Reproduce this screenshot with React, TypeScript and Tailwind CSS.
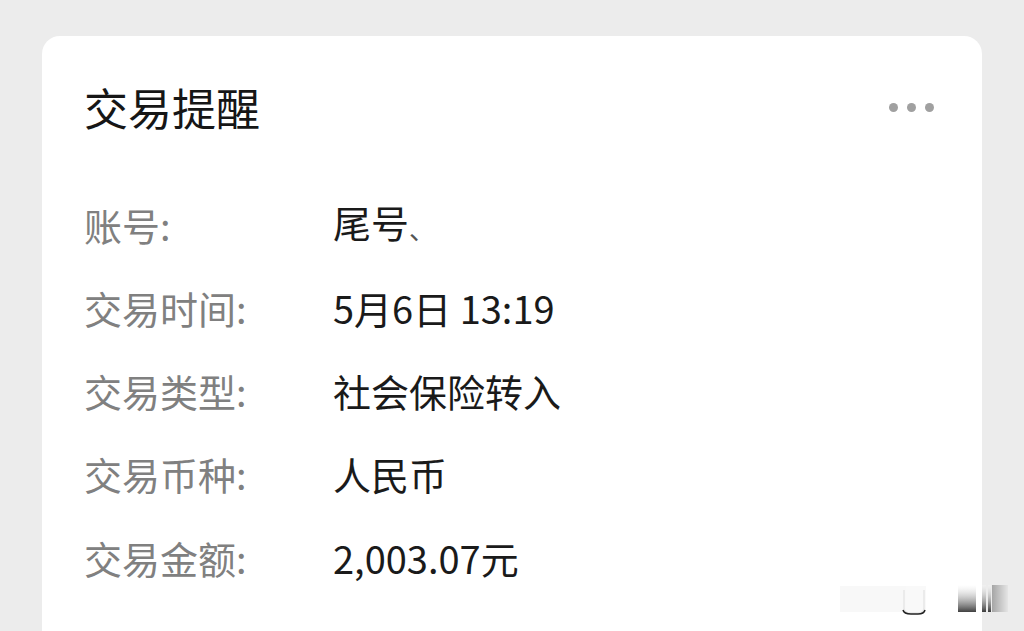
import React from "react";

const rows: [string, React.ReactNode][] = [
  [
    "账号:",
    <>
      尾号<span className="inline-block text-[26px] text-[#555] translate-y-[2px]">、</span>
    </>,
  ],
  ["交易时间:", "5月6日 13:19"],
  ["交易类型:", "社会保险转入"],
  ["交易币种:", "人民币"],
  ["交易金额:", "2,003.07元"],
];

export default function App() {
  return (
    <div
      className="relative w-[1024px] h-[631px] overflow-hidden bg-[#ececec]"
      style={{ fontFamily: '"Noto Sans CJK SC", "Noto Sans", sans-serif' }}
    >
      <div className="ml-[42px] mt-[36px] w-[940px] h-[640px] rounded-[18px] bg-white pl-[42px] pr-[48px] pt-[41px]">
        <div className="flex items-center justify-between h-[60px]">
          <div className="text-[44px] leading-[60px] text-[#161616] font-normal">交易提醒</div>
          <div className="flex gap-[9px] items-center">
            <span className="block w-[9px] h-[9px] rounded-full bg-[#a0a0a0]" />
            <span className="block w-[9px] h-[9px] rounded-full bg-[#a0a0a0]" />
            <span className="block w-[9px] h-[9px] rounded-full bg-[#a0a0a0]" />
          </div>
        </div>
        <div className="mt-[46px] flex flex-col">
          {rows.map(([k, v]) => (
            <div key={k} className="flex items-center h-[83.25px]">
              <div className="w-[249px] text-[38px] leading-[50px] text-[#808080]">{k}</div>
              <div className="text-[38px] leading-[50px] text-[#1a1a1a]">{v}</div>
            </div>
          ))}
        </div>
      </div>
      <svg
        className="absolute left-[836px] top-[580px]"
        width="176"
        height="40"
        viewBox="0 0 176 40"
      >
        <defs>
          <linearGradient id="g1" x1="0" y1="0" x2="0" y2="1">
            <stop offset="0" stopColor="#ffffff" stopOpacity="0.2" />
            <stop offset="1" stopColor="#000000" stopOpacity="0.75" />
          </linearGradient>
          <linearGradient id="g2" x1="0" y1="0" x2="1" y2="0">
            <stop offset="0" stopColor="#000000" stopOpacity="0.5" />
            <stop offset="1" stopColor="#000000" stopOpacity="0.05" />
          </linearGradient>
        </defs>
        <rect x="4" y="6" width="66" height="26" fill="#f5f5f5" opacity="0.7" />
        <rect x="70" y="6" width="20" height="26" fill="#f9f9f9" />
        <path d="M68 10 V28 Q68 33 74 33 H82 Q88 33 88 28 V10" fill="none" stroke="#e6e6e6" strokeWidth="1.5" />
        <path d="M67 30 Q68 34 75 34 H82 Q88 34 89 30" fill="none" stroke="#222" strokeWidth="1.5" />
        <rect x="122" y="5" width="18" height="27" fill="url(#g1)" />
        <rect x="146" y="5" width="4" height="27" fill="url(#g1)" />
        <rect x="152" y="5" width="3" height="27" fill="url(#g1)" />
        <rect x="156" y="5" width="16" height="27" fill="url(#g2)" opacity="0.6" />
      </svg>
    </div>
  );
}
